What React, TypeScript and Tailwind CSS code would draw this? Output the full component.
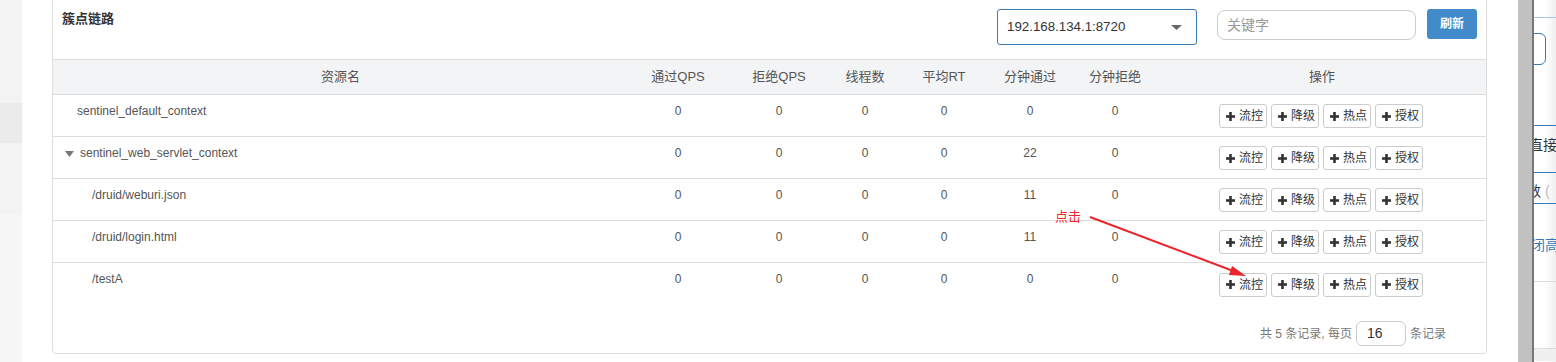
import React from "react";

const FONT = '"Liberation Sans", "Noto Sans CJK SC", Arial, sans-serif';

type Row = {
  name: string;
  level: 0 | 1 | 2;
  expanded?: boolean;
  vals: string[];
};

const rows: Row[] = [
  { name: "sentinel_default_context", level: 0, vals: ["0", "0", "0", "0", "0", "0"] },
  { name: "sentinel_web_servlet_context", level: 1, expanded: true, vals: ["0", "0", "0", "0", "22", "0"] },
  { name: "/druid/weburi.json", level: 2, vals: ["0", "0", "0", "0", "11", "0"] },
  { name: "/druid/login.html", level: 2, vals: ["0", "0", "0", "0", "11", "0"] },
  { name: "/testA", level: 2, vals: ["0", "0", "0", "0", "0", "0"] },
];

const headers = ["通过QPS", "拒绝QPS", "线程数", "平均RT", "分钟通过", "分钟拒绝"];

const GRID = "grid grid-cols-[575px_100px_102px_70px_88px_84px_86px_1fr]";

function Plus() {
  return (
    <svg width="9" height="9" viewBox="0 0 9 9" className="shrink-0">
      <rect x="3.2" y="0" width="2.6" height="9" fill="#333" />
      <rect x="0" y="3.2" width="9" height="2.6" fill="#333" />
    </svg>
  );
}

function OpButton({ label }: { label: string }) {
  return (
    <button className="flex h-[24px] w-[48px] items-center gap-[4px] rounded-[3px] border border-[#ccc] bg-white pl-[6px] text-[12px] leading-none text-[#333]">
      <Plus />
      <span>{label}</span>
    </button>
  );
}

function Ops() {
  return (
    <div className="flex items-center justify-center gap-[4px] pr-[2px]">
      <OpButton label="流控" />
      <OpButton label="降级" />
      <OpButton label="热点" />
      <OpButton label="授权" />
    </div>
  );
}

function TableRow({ row, last }: { row: Row; last: boolean }) {
  const pad = row.level === 0 ? "pl-[24px]" : row.level === 1 ? "pl-[12px]" : "pl-[39px]";
  return (
    <div className={`${GRID} h-[42px] ${last ? "" : "border-b border-[#ddd]"}`}>
      <div className={`flex items-start pt-[6px] ${pad} text-[12px] leading-[20px] text-[#555]`}>
        {row.expanded && (
          <svg width="9" height="7" viewBox="0 0 9 7" className="mr-[6px] mt-[8px]">
            <polygon points="0,0 9,0 4.5,6" fill="#777" />
          </svg>
        )}
        <span>{row.name}</span>
      </div>
      {row.vals.map((v, i) => (
        <div key={i} className="pt-[6px] text-center text-[12px] leading-[20px] text-[#555]">
          {v}
        </div>
      ))}
      <div className="flex items-center justify-center pt-[1px]">
        <Ops />
      </div>
    </div>
  );
}

function Panel() {
  return (
    <div className="mt-[-4px] flex h-[358px] w-[1435px] shrink-0 flex-col rounded-[4px] border border-[#ddd] bg-white">
      <div className="flex h-[62px] items-start pl-[9px] pr-[9px] pt-[4px]">
        <div className="mt-[9px] text-[13px] font-bold leading-[18px] text-[#333]">簇点链路</div>
        <div className="ml-auto flex items-start">
          <div className="mt-[8px] flex h-[36px] w-[200px] items-center rounded-[3px] border border-[#3a79b8] pl-[9px] pr-[14px]">
            <span className="text-[13.3px] text-[#333]">192.168.134.1:8720</span>
            <svg width="11" height="5" viewBox="0 0 11 5" className="ml-auto">
              <polygon points="0,0 11,0 5.5,5" fill="#666" />
            </svg>
          </div>
          <div className="ml-[20px] mt-[9px] flex h-[30px] w-[199px] items-center rounded-[8px] border border-[#ccc] pl-[9px]">
            <span className="text-[14px] text-[#999]">关键字</span>
          </div>
          <div className="ml-[11px] mt-[8px] flex h-[30px] w-[50px] items-center justify-center rounded-[3px] bg-[#428bca] text-[12px] font-bold text-white">
            刷新
          </div>
        </div>
      </div>
      <div className={`${GRID} h-[36px] border-y border-[#ddd] bg-[#f3f4f6] text-[13px] text-[#555]`}>
        <div className="flex items-center justify-center">资源名</div>
        {headers.map((h) => (
          <div key={h} className="flex items-center justify-center">
            {h}
          </div>
        ))}
        <div className="flex items-center justify-center">操作</div>
      </div>
      {rows.map((r, i) => (
        <TableRow key={r.name} row={r} last={i === rows.length - 1} />
      ))}
      <div className="flex items-center justify-end pr-[40px] pt-[16px] text-[12px] text-[#777]">
        <span>共 5 条记录, 每页</span>
        <div className="ml-[4px] flex h-[25px] w-[50px] items-center rounded-[6px] border border-[#ccc] pl-[10px] text-[14px] text-[#333]">
          16
        </div>
        <span className="ml-[4px]">条记录</span>
      </div>
    </div>
  );
}

function RightPanel() {
  return (
    <div className="relative h-[362px] w-[22px] shrink-0 overflow-hidden bg-gradient-to-r from-white via-white to-[#efefef]">
      <div className="mt-[17px] h-px w-full bg-[#a9c4e0]" />
      <div className="ml-[-20px] mt-[15px] h-[32px] w-[32px] rounded-[6px] border border-[#3a79b8]" />
      <div className="mt-[60px] h-px w-full bg-[#3a79b8]" />
      <div className="ml-[-5px] mt-[10px] whitespace-nowrap text-[14px] leading-[18px] text-[#333]">直接</div>
      <div className="mt-[18px] h-px w-full bg-[#3a79b8]" />
      <div className="ml-[-7px] mt-[9px] whitespace-nowrap text-[14px] leading-[18px] text-[#333]">
        数 <span className="text-[#bbb]">(</span>
      </div>
      <div className="mt-[3px] h-px w-full bg-[#3a79b8]" />
      <div className="ml-[-3px] mt-[32px] whitespace-nowrap text-[14px] leading-[18px] text-[#3a79b8]">闭高</div>
      <div className="mt-[27px] h-px w-full bg-[#ddd]" />
      <div className="mt-[66px] h-px w-full bg-[#ddd]" />
      <div className="h-[12px] w-full bg-[#f0f0f0]" />
    </div>
  );
}

export default function App() {
  return (
    <div className="relative flex h-[362px] w-[1556px] overflow-hidden bg-white" style={{ fontFamily: FONT }}>
      <div className="flex w-[22px] shrink-0 flex-col">
        <div className="h-[103px] bg-[#f3f3f3]" />
        <div className="h-[40px] bg-[#ebebeb]" />
        <div className="h-[72px] bg-[#f3f3f3]" />
        <div className="flex-1 bg-[#f7f7f7]" />
      </div>
      <div className="w-[30px] shrink-0" />
      <Panel />
      <div className="w-[31px] shrink-0" />
      <div className="h-[362px] w-[14px] shrink-0 bg-[#c1c1c1]" />
      <div className="h-[362px] w-[2px] shrink-0 bg-[#777]" />
      <RightPanel />

      {/* annotation overlay */}
      <div className="absolute left-[1055px] top-[209px] text-[13px] leading-[16px] text-[#f0262a]">点击</div>
      <svg className="pointer-events-none absolute left-0 top-0" width="1556" height="362">
        <line x1="1090" y1="217" x2="1236" y2="272" stroke="#e8262b" strokeWidth="2" />
        <polygon points="1246,276 1232,266 1229,275" fill="#e8262b" />
      </svg>
    </div>
  );
}
